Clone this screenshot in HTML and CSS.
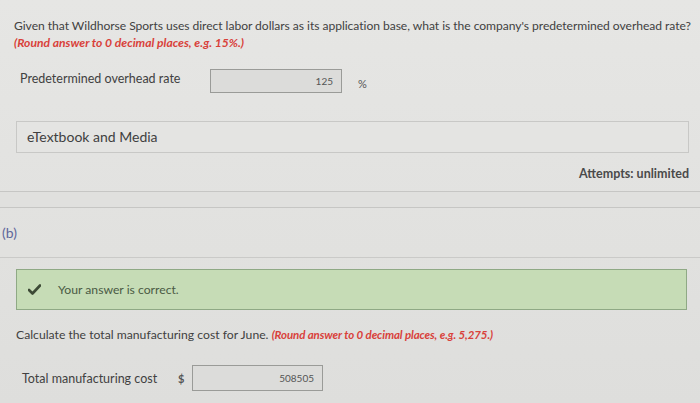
FILE: index.html
```html
<!DOCTYPE html>
<html>
<head>
<meta charset="utf-8">
<link rel="stylesheet" href="styles.css">
</head>
<body>
<div class="page">
  <div class="part-a">
    <p class="q q-a">Given that Wildhorse Sports uses direct labor dollars as its application base, what is the company's predetermined overhead rate?</p>
    <p class="hint">(Round answer to 0 decimal places, e.g. 15%.)</p>
    <div class="row row-a">
      <span class="label label-a">Predetermined overhead rate</span>
      <span class="input input-a">125</span>
      <span class="unit">%</span>
    </div>
    <div class="media">eTextbook and Media</div>
    <div class="attempts">Attempts: unlimited</div>
  </div>
  <div class="divider"></div>
  <div class="part-b">
    <div class="part-label">(b)</div>
  </div>
  <div class="part-b-body">
    <div class="correct">
      <svg class="check" width="13" height="11" viewBox="0 0 13 11"><path d="M1 6 L4.5 9.5 L12 1.5" fill="none" stroke="#3d4a36" stroke-width="2.6" stroke-linecap="round" stroke-linejoin="round"/></svg>
      <span>Your answer is correct.</span>
    </div>
    <p class="q q-b">Calculate the total manufacturing cost for June. <span class="hint-inline">(Round answer to 0 decimal places, e.g. 5,275.)</span></p>
    <div class="row row-b">
      <span class="label label-b">Total manufacturing cost</span>
      <span class="dollar">$</span>
      <span class="input input-b">508505</span>
    </div>
  </div>
</div>
</body>
</html>
```
FILE: styles.css
```css
html, body {
  margin: 0;
  padding: 0;
}
body {
  width: 700px;
  height: 403px;
  overflow: hidden;
  background: linear-gradient(180deg, #e6e6e4 0%, #e2e2e0 50%, #dededc 100%);
  font-family: Lato, "Open Sans", sans-serif;
  color: #414141;
}
.page {
  display: flex;
  flex-direction: column;
}
.part-a {
  padding: 17px 8px 0 14px;
}
.q {
  margin: 0;
  font-size: 12.2px;
  line-height: 17px;
  white-space: nowrap;
}
.q-a {
  font-size: 12.1px;
  letter-spacing: -0.04px;
}
.hint {
  margin: 0;
  font-size: 12.1px;
  line-height: 17px;
  color: #d9413a;
  font-weight: 700;
  font-style: italic;
}
.row {
  display: flex;
  align-items: center;
}
.row-a {
  margin-top: 18px;
  padding-left: 6px;
}
.label {
  font-size: 12.5px;
}
.label-a {
  width: 190px;
  margin-top: -5px;
}
.input {
  box-sizing: border-box;
  height: 24px;
  border: 1px solid #9a9b98;
  background: #dcdcda;
  text-align: right;
  font-size: 10px;
  line-height: 22px;
  color: #555;
  padding-right: 8px;
}
.input-a {
  width: 132px;
}
.unit {
  margin-left: 16px;
  font-size: 11px;
  padding-top: 4px;
  color: #555;
}
.media {
  margin: 28px 3px 0 2px;
  box-sizing: border-box;
  height: 32px;
  border: 1px solid #c8c8c6;
  background: #e4e4e2;
  padding-left: 10px;
  font-size: 14px;
  line-height: 30px;
  color: #404040;
}
.attempts {
  margin-top: 13px;
  margin-right: 3px;
  text-align: right;
  font-size: 12.5px;
  font-weight: 700;
  color: #4a4a4a;
  line-height: 16px;
}
.divider {
  margin-top: 9px;
  height: 15px;
  border-top: 1px solid #c6c6c4;
  border-bottom: 1px solid #c6c6c4;
  background: #e0e0de;
}
.part-b {
  height: 49px;
  border-bottom: 1px solid #cacac8;
  display: flex;
  align-items: center;
  padding-left: 2px;
}
.part-label {
  font-size: 14px;
  color: #5f679b;
  margin-top: -1px;
}
.part-b-body {
  padding: 11px 13px 0 16px;
}
.correct {
  box-sizing: border-box;
  height: 41px;
  border: 1px solid #8fa985;
  background: #c6dcb6;
  display: flex;
  align-items: center;
  padding-left: 11px;
  font-size: 12.2px;
  color: #4a5a44;
}
.check {
  margin-right: 17px;
}
.q-b {
  margin-top: 16px;
}
.hint-inline {
  color: #d9413a;
  font-weight: 700;
  font-style: italic;
  font-size: 11.5px;
  letter-spacing: -0.1px;
}
.row-b {
  margin-top: 22px;
  padding-left: 6px;
}
.label-b {
  width: 156px;
}
.dollar {
  width: 14px;
  font-size: 11px;
  font-weight: 700;
  color: #555;
}
.input-b {
  width: 131px;
  height: 26px;
  line-height: 24px;
}
```
